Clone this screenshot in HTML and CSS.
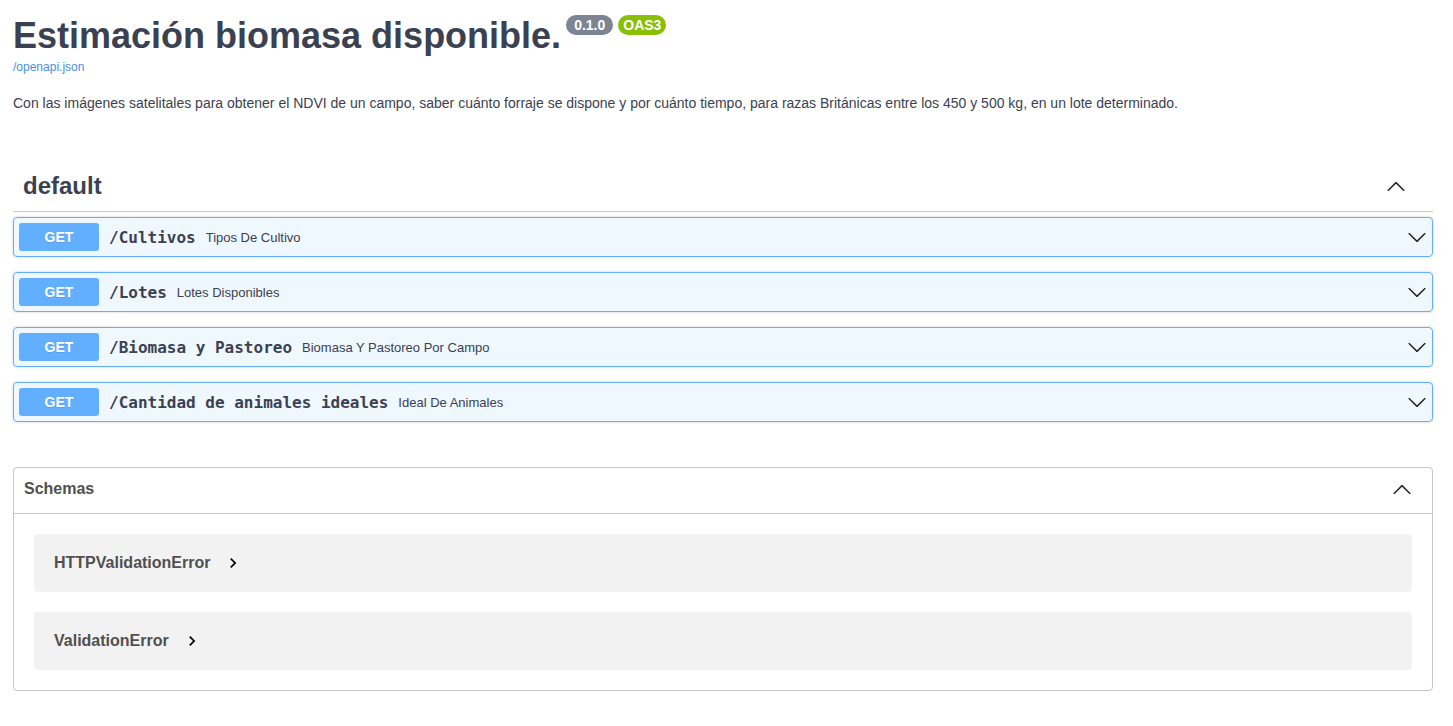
FILE: index.html
```html
<!DOCTYPE html>
<html lang="es">
<head>
<meta charset="utf-8">
<title>Estimación biomasa disponible.</title>
<link rel="stylesheet" href="styles.css">
</head>
<body>
<div class="wrapper">
  <section class="info">
    <h2 class="title">Estimación biomasa disponible.<span class="badges"><span class="badge version">0.1.0</span><span class="badge oas">OAS3</span></span></h2>
    <a class="link" href="#">/openapi.json</a>
    <p class="desc">Con las imágenes satelitales para obtener el NDVI de un campo, saber cuánto forraje se dispone y por cuánto tiempo, para razas Británicas entre los 450 y 500 kg, en un lote determinado.</p>
  </section>

  <section class="tag-section">
    <h3 class="tag">
      <span class="tag-name">default</span>
      <svg class="arrow-up" viewBox="0 0 20 20" width="20" height="20"><path d="M 17.418 14.908c.272.268.709.268.979 0s.271-.701 0-.969l-7.908-7.830c-.27-.268-.707-.268-.979 0l-7.908 7.830c-.27.268-.27.701 0 .969.271.268.709.268.979 0L10 7.767l7.418 7.141z"/></svg>
    </h3>
    <div class="ops">
      <div class="opblock">
        <span class="method">GET</span>
        <span class="path">/Cultivos</span>
        <span class="summary">Tipos De Cultivo</span>
        <svg class="arrow-down" viewBox="0 0 20 20" width="20" height="20"><path d="M 17.418 6.109c.272-.268.709-.268.979 0s.271.701 0 .969l-7.908 7.83c-.27.268-.707.268-.979 0l-7.908-7.83c-.27-.268-.27-.701 0-.969.271-.268.709-.268.979 0L10 13.25l7.418-7.141z"/></svg>
      </div>
      <div class="opblock">
        <span class="method">GET</span>
        <span class="path">/Lotes</span>
        <span class="summary">Lotes Disponibles</span>
        <svg class="arrow-down" viewBox="0 0 20 20" width="20" height="20"><path d="M 17.418 6.109c.272-.268.709-.268.979 0s.271.701 0 .969l-7.908 7.83c-.27.268-.707.268-.979 0l-7.908-7.83c-.27-.268-.27-.701 0-.969.271-.268.709-.268.979 0L10 13.25l7.418-7.141z"/></svg>
      </div>
      <div class="opblock">
        <span class="method">GET</span>
        <span class="path">/Biomasa y Pastoreo</span>
        <span class="summary">Biomasa Y Pastoreo Por Campo</span>
        <svg class="arrow-down" viewBox="0 0 20 20" width="20" height="20"><path d="M 17.418 6.109c.272-.268.709-.268.979 0s.271.701 0 .969l-7.908 7.83c-.27.268-.707.268-.979 0l-7.908-7.830c-.27-.268-.27-.701 0-.969.271-.268.709-.268.979 0L10 13.25l7.418-7.141z"/></svg>
      </div>
      <div class="opblock">
        <span class="method">GET</span>
        <span class="path">/Cantidad de animales ideales</span>
        <span class="summary">Ideal De Animales</span>
        <svg class="arrow-down" viewBox="0 0 20 20" width="20" height="20"><path d="M 17.418 6.109c.272-.268.709-.268.979 0s.271.701 0 .969l-7.908 7.83c-.27.268-.707.268-.979 0l-7.908-7.83c-.27-.268-.27-.701 0-.969.271-.268.709-.268.979 0L10 13.25l7.418-7.141z"/></svg>
      </div>
    </div>
  </section>

  <section class="models">
    <h4 class="models-head">
      <span>Schemas</span>
      <svg class="arrow-up" viewBox="0 0 20 20" width="20" height="20"><path d="M 17.418 14.908c.272.268.709.268.979 0s.271-.701 0-.969l-7.908-7.830c-.27-.268-.707-.268-.979 0l-7.908 7.830c-.27.268-.27.701 0 .969.271.268.709.268.979 0L10 7.767l7.418 7.141z"/></svg>
    </h4>
    <div class="model-list">
      <div class="model">
        <span class="model-title">HTTPValidationError</span>
        <svg class="model-toggle" viewBox="0 0 24 24" width="20" height="20"><path d="M10 6L8.59 7.41 13.170 12l-4.58 4.59L10 18l6-6z"/></svg>
      </div>
      <div class="model">
        <span class="model-title">ValidationError</span>
        <svg class="model-toggle" viewBox="0 0 24 24" width="20" height="20"><path d="M10 6L8.59 7.41 13.170 12l-4.58 4.59L10 18l6-6z"/></svg>
      </div>
    </div>
  </section>
</div>
</body>
</html>
```

FILE: styles.css
```css
html, body {
  margin: 0;
  padding: 0;
  background: #fff;
}
body {
  font-family: "Liberation Sans", Arial, sans-serif;
  color: #3b4151;
}
.wrapper {
  padding: 15px 20px 30px 13px;
}

/* info */
.info {
  margin: 0 0 51px;
}
.title {
  margin: 0;
  font-size: 36px;
  font-weight: 700;
  color: #3b4151;
  line-height: 41px;
  display: flex;
  align-items: flex-start;
}
.badges {
  display: flex;
  gap: 5px;
  margin-left: 5px;
}
.badge {
  display: inline-block;
  font-size: 14px;
  font-weight: 700;
  line-height: 16px;
  color: #fff;
  padding: 2px 8px;
  border-radius: 57px;
}
.badge.version {
  background: #7d8492;
}
.badge.oas {
  background: #89bf04;
  padding: 2px 5px;
}
.link {
  display: block;
  margin-top: 4px;
  font-size: 12px;
  line-height: 14px;
  color: #4990e2;
  text-decoration: none;
}
.desc {
  margin: 21px 0 0;
  font-size: 14px;
  line-height: 16px;
  color: #3b4151;
}

/* tag */
.tag {
  margin: 0 0 5px;
  padding: 10px 27px 11px 10px;
  display: flex;
  align-items: center;
  justify-content: space-between;
  border-bottom: 1px solid rgba(59, 65, 81, .3);
  font-size: 24px;
  line-height: 28px;
  font-weight: 700;
  color: #3b4151;
}
.arrow-up, .arrow-down {
  fill: #222;
  flex: none;
}
.ops {
  display: flex;
  flex-direction: column;
  gap: 15px;
}
.opblock {
  display: flex;
  align-items: center;
  height: 38px;
  padding: 0 5px;
  border: 1px solid #61affe;
  border-radius: 4px;
  background: rgba(97, 175, 254, .1);
  box-shadow: 0 0 3px rgba(0, 0, 0, .19);
}
.method {
  flex: none;
  width: 80px;
  height: 28px;
  line-height: 28px;
  text-align: center;
  background: #61affe;
  color: #fff;
  font-size: 14px;
  font-weight: 700;
  border-radius: 3px;
  text-shadow: 0 1px 0 rgba(0, 0, 0, .1);
}
.path {
  padding: 0 10px;
  font-family: "DejaVu Sans Mono", monospace;
  font-size: 16px;
  font-weight: 700;
  color: #3b4151;
}
.summary {
  flex: 1;
  font-size: 13px;
  color: #3b4151;
}

/* models */
.models {
  margin-top: 45px;
  border: 1px solid rgba(59, 65, 81, .3);
  border-radius: 4px;
}
.models-head {
  margin: 0;
  height: 41px;
  padding: 0 20px 4px 10px;
  display: flex;
  align-items: center;
  justify-content: space-between;
  border-bottom: 1px solid rgba(59, 65, 81, .3);
  font-size: 16px;
  font-weight: 700;
  color: #505050;
}
.model-list {
  padding: 20px;
  display: flex;
  flex-direction: column;
  gap: 20px;
}
.model {
  height: 58px;
  display: flex;
  align-items: center;
  padding: 0 20px;
  background: rgba(0, 0, 0, .05);
  border-radius: 4px;
}
.model-title {
  font-size: 16px;
  font-weight: 700;
  color: #505050;
}
.model-toggle {
  margin-left: 13px;
  width: 20px;
  height: 20px;
  fill: #000;
}
```
